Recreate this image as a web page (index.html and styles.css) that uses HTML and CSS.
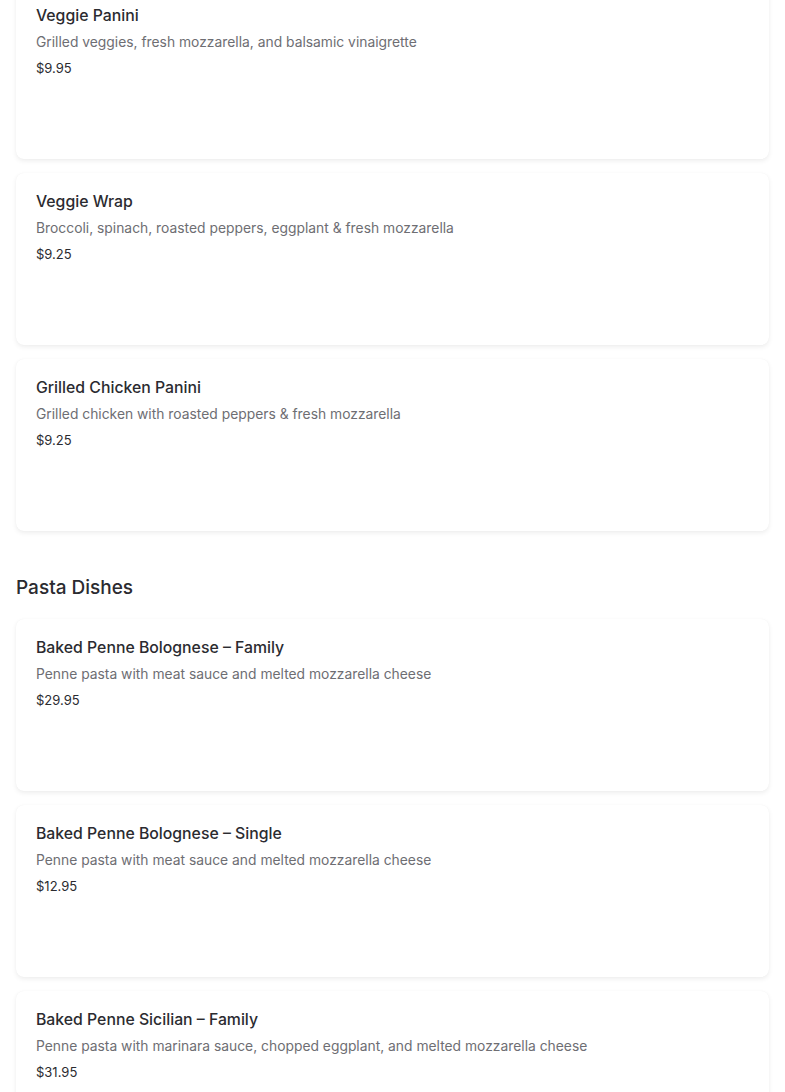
FILE: index.html
```html
<!DOCTYPE html>
<html>
<head>
<meta charset="utf-8">
<link rel="stylesheet" href="styles.css">
</head>
<body>
<main class="menu">
  <section class="section section-first">
    <div class="items">
      <article class="card">
        <h3 class="title">Veggie Panini</h3>
        <p class="desc">Grilled veggies, fresh mozzarella, and balsamic vinaigrette</p>
        <p class="price">$9.95</p>
      </article>
      <article class="card">
        <h3 class="title">Veggie Wrap</h3>
        <p class="desc">Broccoli, spinach, roasted peppers, eggplant &amp; fresh mozzarella</p>
        <p class="price">$9.25</p>
      </article>
      <article class="card">
        <h3 class="title">Grilled Chicken Panini</h3>
        <p class="desc">Grilled chicken with roasted peppers &amp; fresh mozzarella</p>
        <p class="price">$9.25</p>
      </article>
    </div>
  </section>
  <section class="section">
    <h2 class="section-title">Pasta Dishes</h2>
    <div class="items">
      <article class="card">
        <h3 class="title">Baked Penne Bolognese – Family</h3>
        <p class="desc">Penne pasta with meat sauce and melted mozzarella cheese</p>
        <p class="price">$29.95</p>
      </article>
      <article class="card">
        <h3 class="title">Baked Penne Bolognese – Single</h3>
        <p class="desc">Penne pasta with meat sauce and melted mozzarella cheese</p>
        <p class="price">$12.95</p>
      </article>
      <article class="card">
        <h3 class="title">Baked Penne Sicilian – Family</h3>
        <p class="desc">Penne pasta with marinara sauce, chopped eggplant, and melted mozzarella cheese</p>
        <p class="price">$31.95</p>
      </article>
    </div>
  </section>
</main>
</body>
</html>
```
FILE: styles.css
```css
html, body {
  margin: 0;
  padding: 0;
  background: #ffffff;
}
body {
  font-family: Inter, "Noto Sans", "Liberation Sans", sans-serif;
  color: #2b2b30;
  overflow: hidden;
}
.menu {
  padding: 0 16px;
  margin-top: -13px;
}
.section-title {
  margin: 0;
  padding: 43px 0 17px;
  font-size: 19px;
  line-height: 28px;
  font-weight: 500;
  color: #2b2b30;
}
.items {
  display: flex;
  flex-direction: column;
  gap: 14px;
}
.card {
  height: 172px;
  box-sizing: border-box;
  padding: 19px 20px;
  background: #fff;
  border-radius: 8px;
  box-shadow: 0 2px 5px rgba(0, 0, 0, 0.07), 0 0 1px rgba(0, 0, 0, 0.05);
}
.title {
  margin: 0;
  font-size: 15.8px;
  line-height: 20px;
  font-weight: 500;
  color: #2b2b30;
}
.desc {
  margin: 6px 0 0;
  font-size: 13.85px;
  line-height: 20px;
  color: #6e6e73;
}
.price {
  margin: 7px 0 0;
  font-size: 13px;
  line-height: 18px;
  color: #2b2b30;
}
```
